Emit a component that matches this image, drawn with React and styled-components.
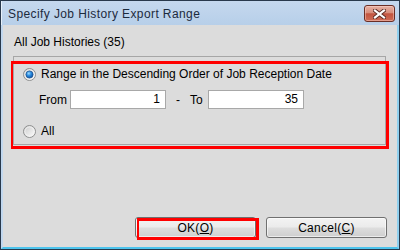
import React from "react";
import styled, { createGlobalStyle } from "styled-components";

const Global = createGlobalStyle`
  html, body { margin: 0; padding: 0; background: #ffffff; }
  * { box-sizing: border-box; }
`;

const font = `"Liberation Sans", Arial, sans-serif`;

const Window = styled.div`
  width: 400px;
  height: 250px;
  border: 1px solid #29394c;
  display: flex;
  flex-direction: column;
  font-family: ${font};
  font-size: 12px;
  color: #000;
  background: #b9d1ea;
`;

const TitleBar = styled.div`
  height: 24px;
  display: flex;
  align-items: flex-start;
  justify-content: space-between;
  background: linear-gradient(#c5d8ee, #b7cfe9);
  border-left: 1px solid #e6f0fa;
`;

const Title = styled.div`
  padding: 6px 0 0 6px;
  font-size: 12px;
  color: #1c2a3d;
  letter-spacing: 0.4px;
`;

const CloseButton = styled.div`
  width: 31px;
  height: 17px;
  margin: 4px 4px 0 0;
  border: 1px solid #6a2e25;
  border-radius: 3px;
  background: linear-gradient(#e6b1a4 0%, #d88e7c 45%, #c2543f 52%, #cf6d57 100%);
  box-shadow: inset 0 0 0 1px rgba(255, 220, 210, 0.45);
  display: flex;
  align-items: center;
  justify-content: center;
`;

const Body = styled.div`
  flex: 1;
  display: flex;
  flex-direction: column;
  background: #dcdcdc;
  border-left: 2px solid #c2d8ef;
  border-right: 2px solid #8fd0ef;
  border-bottom: 2px solid #4cc3ec;
  padding: 10px 11px 9px 10px;
`;

const Header = styled.div`
  margin-left: 1px;
  line-height: 14px;
`;

const GroupBox = styled.div`
  position: relative;
  margin-top: 7px;
  height: 89px;
  border: 1px solid #a6a6a6;
  padding: 9px 0 0 9px;
  display: flex;
  flex-direction: column;
`;

const Highlight = styled.div`
  position: absolute;
  top: ${(p) => p.$top}px;
  left: ${(p) => p.$left}px;
  right: ${(p) => p.$right}px;
  bottom: ${(p) => p.$bottom}px;
  border: 3px solid #ff0000;
  border-left-width: 2px;
  pointer-events: none;
`;

const RadioRow = styled.label`
  display: flex;
  align-items: center;
  height: 16px;
  gap: 5px;
  margin-top: ${(p) => p.$mt || 0}px;
  line-height: 14px;
`;

const RangeRow = styled.div`
  display: flex;
  align-items: center;
  height: 19px;
  margin-top: 8px;
  padding-left: 16px;
`;

const Label = styled.span`
  width: ${(p) => p.$w}px;
  text-align: ${(p) => p.$align || "left"};
`;

const NumberBox = styled.div`
  width: 96px;
  height: 19px;
  background: #ffffff;
  border: 1px solid #a8a8a8;
  text-align: right;
  padding-right: 5px;
  line-height: 17px;
`;

const Footer = styled.div`
  margin-top: auto;
  display: flex;
  justify-content: flex-end;
  gap: 10px;
  margin-right: -1px;
`;

const Button = styled.div`
  position: relative;
  width: 121px;
  height: 21px;
  border: 1px solid #707070;
  border-radius: 3px;
  background: linear-gradient(#f3f3f3 0%, #ebebeb 48%, #dddddd 52%, #cfcfcf 100%);
  box-shadow: inset 0 0 0 1px rgba(255, 255, 255, 0.6);
  display: flex;
  align-items: center;
  justify-content: center;
  line-height: 14px;
  letter-spacing: 0.3px;
`;

const Mnemonic = styled.span`
  text-decoration: underline;
`;

const Radio = ({ checked }) => (
  <svg width="13" height="13" viewBox="0 0 13 13">
    <defs>
      <linearGradient id={checked ? "rg1" : "rg0"} x1="0" y1="0" x2="1" y2="1">
        <stop offset="0" stopColor="#c9c9c9" />
        <stop offset="1" stopColor="#ffffff" />
      </linearGradient>
      <radialGradient id="dot" cx="0.4" cy="0.35" r="0.7">
        <stop offset="0" stopColor="#9fdcff" />
        <stop offset="0.45" stopColor="#2a8be0" />
        <stop offset="1" stopColor="#0b4e9e" />
      </radialGradient>
    </defs>
    <circle cx="6.5" cy="6.5" r="6" fill={`url(#${checked ? "rg1" : "rg0"})`} stroke="#8e8f8f" strokeWidth="1" />
    <circle cx="6.5" cy="6.5" r="4.6" fill="none" stroke="#f4f4f4" strokeWidth="0.8" />
    {checked && <circle cx="6.5" cy="6.5" r="3.6" fill="url(#dot)" stroke="#1c4f8a" strokeWidth="0.7" />}
  </svg>
);

const CloseGlyph = () => (
  <svg width="13" height="10" viewBox="0 0 13 10">
    <path d="M2 1.5 L11 8.5 M11 1.5 L2 8.5" stroke="#5a2a22" strokeWidth="4" strokeLinecap="square" />
    <path d="M2 1.5 L11 8.5 M11 1.5 L2 8.5" stroke="#ffffff" strokeWidth="2.2" strokeLinecap="square" />
  </svg>
);

export default function App() {
  return (
    <>
      <Global />
      <Window>
        <TitleBar>
          <Title>Specify Job History Export Range</Title>
          <CloseButton>
            <CloseGlyph />
          </CloseButton>
        </TitleBar>
        <Body>
          <Header>All Job Histories (35)</Header>
          <GroupBox>
            <Highlight $top={4} $left={-3} $right={-4} $bottom={-5} />
            <RadioRow>
              <Radio checked />
              <span>Range in the Descending Order of Job Reception Date</span>
            </RadioRow>
            <RangeRow>
              <Label $w={31}>From</Label>
              <NumberBox>1</NumberBox>
              <Label $w={24} $align="center">-</Label>
              <Label $w={18}>To</Label>
              <NumberBox>35</NumberBox>
            </RangeRow>
            <RadioRow $mt={14}>
              <Radio />
              <span>All</span>
            </RadioRow>
          </GroupBox>
          <Footer>
            <Button>
              OK(<Mnemonic>O</Mnemonic>)
              <Highlight $top={0} $left={1} $right={-4} $bottom={-3} />
            </Button>
            <Button>
              Cancel(<Mnemonic>C</Mnemonic>)
            </Button>
          </Footer>
        </Body>
      </Window>
    </>
  );
}
